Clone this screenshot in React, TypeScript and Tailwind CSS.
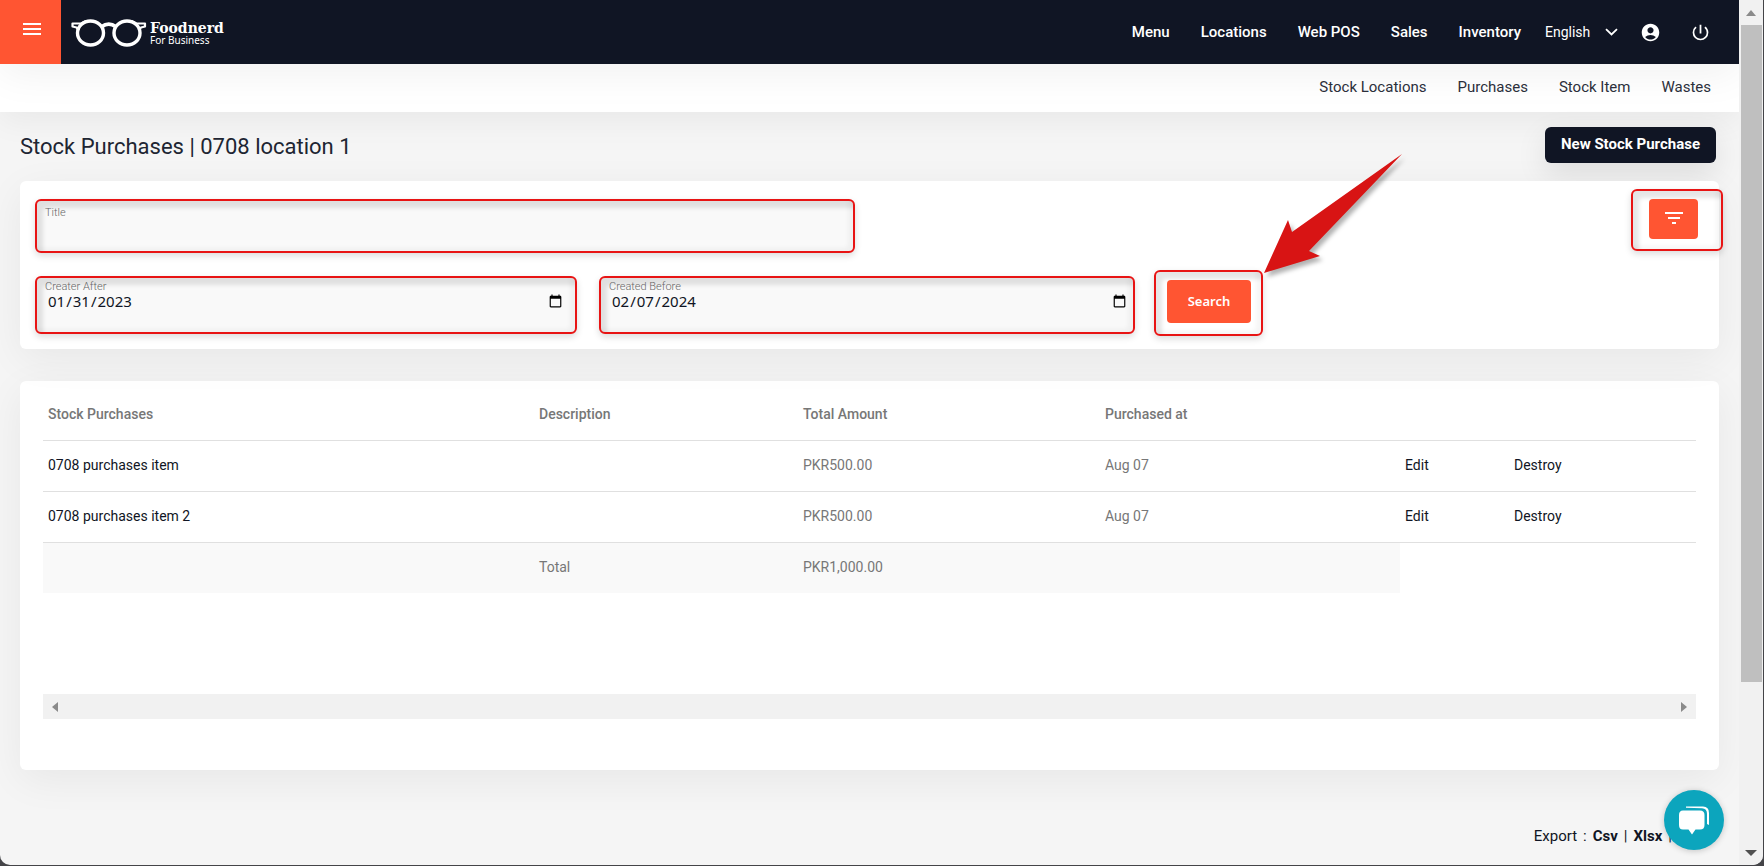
import { MdAccountCircle, MdFilterList, MdMenu, MdPowerSettingsNew } from "react-icons/md";

const mainLinks = ["Menu", "Locations", "Web POS", "Sales", "Inventory"];
const subLinks = ["Stock Locations", "Purchases", "Stock Item", "Wastes"];
const rows = [
  { name: "0708 purchases item", total: "PKR500.00", date: "Aug 07" },
  { name: "0708 purchases item 2", total: "PKR500.00", date: "Aug 07" },
];

const highlight =
  "rounded-md border-2 border-[#e81414] shadow-[0_3px_7px_rgba(0,0,0,0.14),inset_6px_7px_4px_rgba(0,0,0,0.1),inset_-5px_-3px_4px_rgba(0,0,0,0.04)]";
const card = "rounded-md bg-white shadow-[0_10px_40px_rgba(0,0,0,0.06)]";

function Logo() {
  return (
    <a href="#" className="ml-2.5 flex items-center gap-[3px] pt-0.5 text-white">
      <svg width="76" height="30" viewBox="0 0 76 30" fill="none" stroke="currentColor">
        <ellipse cx="19.500" cy="15" rx="13" ry="12" strokeWidth="3.400" />
        <ellipse cx="56" cy="15" rx="13" ry="12" strokeWidth="3.400" />
        <path d="M31 8.500C35 5.500 40.500 5.500 44.500 8.500" strokeWidth="4" />
        <path d="M8 12.500 5.500 9.500 1.500 8.500V5.500H10L15 3" strokeWidth="2.200" strokeLinejoin="round" />
        <path d="M67.500 12.500 70 9.500 74 8.500V5.500H65.500L60.500 3" strokeWidth="2.200" strokeLinejoin="round" />
      </svg>
      <span className="flex flex-col pt-0.5">
        <span className="font-['DejaVu_Serif',serif] text-[14px] leading-3 font-bold">Foodnerd</span>
        <span className="font-['Noto_Sans',sans-serif] text-[10px] leading-3">For Business</span>
      </span>
    </a>
  );
}

function DateField({ id, label, value, className }: { id: string; label: string; value: string; className: string }) {
  return (
    <div className={`${highlight} ${className} mt-1 flex h-[58px] flex-col bg-[#f9f9f9] pt-[3px] pl-2`}>
      <label htmlFor={id} className="text-[11px] leading-3 font-light text-[#666]">
        {label}
      </label>
      <input
        id={id}
        type="date"
        defaultValue={value}
        className="h-4 w-full bg-transparent px-0.5 font-['Noto_Sans',sans-serif] text-[15px] text-[#101524] outline-none"
      />
    </div>
  );
}

export default function App() {
  return (
    <div className="min-h-screen bg-[#444448] pr-px pb-px font-[Roboto,sans-serif] text-[#101524]">
      <div className="relative flex min-h-[calc(100vh-1px)] overflow-hidden rounded-b-[10px] bg-[#f5f5f5]">
        <div className="flex min-w-0 flex-1 flex-col">
          <header className="relative z-10 flex h-16 items-center bg-[#101524] text-white shadow-[0_10px_40px_rgba(0,0,0,0.06)]">
            <button aria-label="Toggle menu" className="flex h-full w-[61px] items-center justify-center bg-[#ff5532] pb-1.5 pl-0.5">
              <MdMenu size={24} />
            </button>
            <Logo />
            <nav className="ml-auto flex items-center gap-[31px] text-[15px] font-medium">
              {mainLinks.map((l) => (
                <a key={l} href="#">
                  {l}
                </a>
              ))}
            </nav>
            <div className="relative ml-6 flex items-center">
              <select aria-label="Language" className="w-[73px] appearance-none bg-transparent text-[14px] outline-none">
                <option>English</option>
              </select>
              <svg width="13" height="8" viewBox="0 0 13 8" fill="none" stroke="currentColor" strokeWidth="1.800" className="pointer-events-none absolute right-0">
                <path d="M1 1.200 6.500 6.500 12 1.200" />
              </svg>
            </div>
            <a href="#" aria-label="Account" className="ml-[22px]">
              <MdAccountCircle size={21} />
            </a>
            <a href="#" aria-label="Log out" className="mr-[28px] ml-[29px]">
              <MdPowerSettingsNew size={21} />
            </a>
          </header>

          <nav className="relative flex h-12 items-center justify-end gap-[31px] bg-white pr-[28px] pb-0.5 text-[15px] shadow-[0_10px_30px_rgba(0,0,0,0.05)]">
            {subLinks.map((l) => (
              <a key={l} href="#" className="text-[#2c303c]">
                {l}
              </a>
            ))}
          </nav>

          <main className="flex flex-1 flex-col px-5">
            <div className="relative flex h-[69px] items-center justify-between">
              <h1 className="text-[22px] text-[#202532]">Stock Purchases | 0708 location 1</h1>
              <button className="mr-[3px] mb-1 h-9 rounded-md bg-[#101524] px-4 text-[15px] font-bold text-white shadow-[0_10px_30px_rgba(0,0,0,0.1)]">
                New Stock Purchase
              </button>
            </div>

            <section className={`${card} relative h-[168px] pt-2 pl-[15px]`}>
              <div className="flex items-start">
                <div className={`${highlight} mt-[10px] flex h-[54px] w-[820px] flex-col bg-[#f9f9f9] px-2 pt-1.5`}>
                  <label htmlFor="title" className="text-[11px] leading-3 font-light text-[#666]">
                    Title
                  </label>
                  <input id="title" type="text" className="h-6 w-full bg-transparent text-[15px] outline-none" />
                </div>
                <div className={`${highlight} -mr-1 ml-auto h-[62px] w-[92px] pt-2 pl-4`}>
                  <button aria-label="Filters" className="flex h-10 w-[49px] items-center justify-center rounded bg-[#ff5532] pb-0.5 text-white">
                    <MdFilterList size={24} />
                  </button>
                </div>
              </div>
              <div className="mt-[17px] flex items-center">
                <DateField id="after" label="Creater After" value="2023-01-31" className="w-[542px] pr-2" />
                <DateField id="before" label="Created Before" value="2024-02-07" className="ml-[22px] w-[536px] pr-0.5" />
                <div className={`${highlight} relative ml-[19px] h-[66px] w-[109px] pt-2 pl-[11px]`}>
                  <button className="h-[43px] w-[84px] rounded bg-[#ff5532] font-['Noto_Sans',sans-serif] text-[13px] font-semibold text-white">Search</button>
                  <svg width="150" height="134" viewBox="0 0 150 134" className="pointer-events-none absolute bottom-[51px] left-[102px] z-10 max-w-none drop-shadow-[3px_4px_2px_rgba(0,0,0,0.3)]">
                    <path d="M6 124 30 71 34 83 144 5 51 102 62 107Z" fill="#d81414" />
                  </svg>
                </div>
              </div>
            </section>

            <section className={`${card} mt-8 h-[389px] px-[23px] pt-2`}>
              <table className="w-full table-fixed text-left text-[14px] text-[#777]">
                <colgroup>
                  <col className="w-[491px]" />
                  <col className="w-[264px]" />
                  <col className="w-[302px]" />
                  <col className="w-[300px]" />
                  <col className="w-[109px]" />
                  <col />
                </colgroup>
                <thead>
                  <tr className="h-[51px] border-b border-[#e0e0e0]">
                    {["Stock Purchases", "Description", "Total Amount", "Purchased at"].map((h) => (
                      <th key={h} className="px-[5px] font-medium">
                        {h}
                      </th>
                    ))}
                    <td />
                    <td />
                  </tr>
                </thead>
                <tbody>
                  {rows.map((r) => (
                    <tr key={r.name} className="h-[51px] border-b border-[#e0e0e0]">
                      <td className="px-[5px]">
                        <a href="#" className="text-[#101524]">
                          {r.name}
                        </a>
                      </td>
                      <td />
                      <td className="px-[5px]">{r.total}</td>
                      <td className="px-[5px]">{r.date}</td>
                      <td className="px-[5px]">
                        <a href="#" className="text-[#101524]">
                          Edit
                        </a>
                      </td>
                      <td className="px-[5px]">
                        <a href="#" className="text-[#101524]">
                          Destroy
                        </a>
                      </td>
                    </tr>
                  ))}
                </tbody>
                <tfoot>
                  <tr className="h-[51px]">
                    <td className="bg-[#f9f9f9]" />
                    <td className="bg-[#f9f9f9] px-[5px]">Total</td>
                    <td className="bg-[#f9f9f9] px-[5px]">PKR1,000.00</td>
                    <td className="bg-[#f9f9f9]" />
                  </tr>
                </tfoot>
              </table>
              <div className="mt-[101px] flex h-[25px] items-center justify-between bg-[#f1f1f1] px-[9px] text-[#8a8a8a]">
                <svg width="6" height="10" viewBox="0 0 6 10" fill="currentColor">
                  <path d="M6 0v10L0 5z" />
                </svg>
                <svg width="6" height="10" viewBox="0 0 6 10" fill="currentColor">
                  <path d="M0 0v10l6-5z" />
                </svg>
              </div>
            </section>

            <footer className="mt-auto flex justify-end gap-1.5 pr-[47px] pb-[19px] text-[15px] leading-5">
              <span>Export</span>
              <span>:</span>
              <a href="#" className="font-bold">
                Csv
              </a>
              <span>|</span>
              <a href="#" className="font-bold">
                Xlsx
              </a>
              <span>|</span>
            </footer>
          </main>
        </div>

        <div className="relative z-10 flex w-6 shrink-0 flex-col items-center bg-[#f1f1f1]">
          <div className="flex h-[25px] items-center text-[#8a8a8a]">
            <svg width="10" height="6" viewBox="0 0 10 6" fill="currentColor">
              <path d="M0 6h10L5 0z" />
            </svg>
          </div>
          <div className="h-[657px] w-[21px] bg-[#bfbfbf]" />
          <div className="mt-auto flex h-[25px] items-center text-[#505050]">
            <svg width="12" height="6" viewBox="0 0 12 6" fill="currentColor">
              <path d="M0 0h12L6 6z" />
            </svg>
          </div>
        </div>

        <button aria-label="Open chat" className="absolute right-[39px] bottom-[15px] flex size-[60px] items-center justify-center rounded-full bg-[#0ca5bd] shadow-[0_1px_6px_rgba(0,0,0,0.2)]">
          <svg width="32" height="30" viewBox="0 0 32 30" fill="#fff">
            <path d="M5 5.500H22Q26.500 5.500 26.500 10V20Q26.500 24.500 22 24.500H17.500L14 29.500 10.500 24.500H5Q1 24.500 1 20V10Q1 5.500 5 5.500Z" />
            <path d="M8 1.500H25Q31 1.500 31 8V20L29 19V9Q29 3.500 24 3.300L8 2.800Z" />
          </svg>
        </button>
      </div>
    </div>
  );
}
